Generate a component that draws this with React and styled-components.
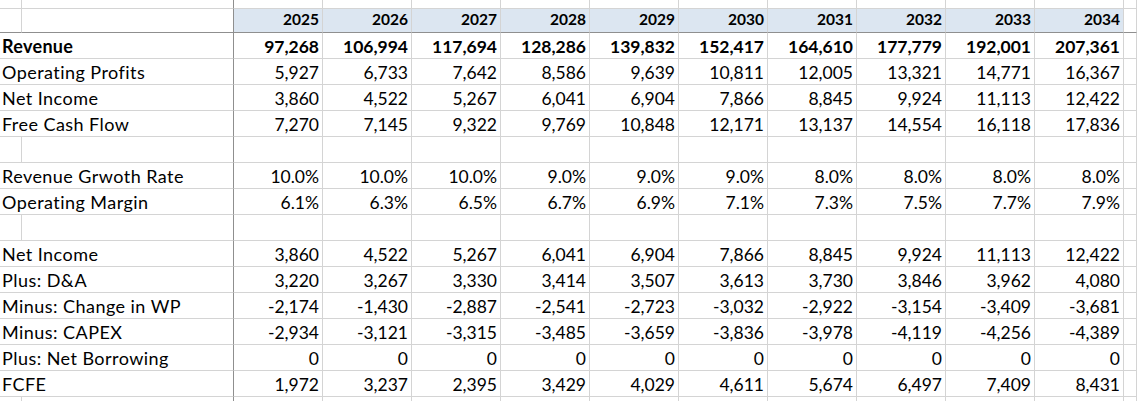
import React from 'react';
import styled, { createGlobalStyle } from 'styled-components';

const GlobalStyle = createGlobalStyle`
  body {
    margin: 0;
    background: #fff;
    color: #000;
    font-family: Lato, "Liberation Sans", sans-serif;
  }
`;

const years = [2025, 2026, 2027, 2028, 2029, 2030, 2031, 2032, 2033, 2034];

const rows = [
  { label: 'Revenue', bold: true, values: ['97,268', '106,994', '117,694', '128,286', '139,832', '152,417', '164,610', '177,779', '192,001', '207,361'] },
  { label: 'Operating Profits', values: ['5,927', '6,733', '7,642', '8,586', '9,639', '10,811', '12,005', '13,321', '14,771', '16,367'] },
  { label: 'Net Income', values: ['3,860', '4,522', '5,267', '6,041', '6,904', '7,866', '8,845', '9,924', '11,113', '12,422'] },
  { label: 'Free Cash Flow', values: ['7,270', '7,145', '9,322', '9,769', '10,848', '12,171', '13,137', '14,554', '16,118', '17,836'] },
  null,
  { label: 'Revenue Grwoth Rate', values: ['10.0%', '10.0%', '10.0%', '9.0%', '9.0%', '9.0%', '8.0%', '8.0%', '8.0%', '8.0%'] },
  { label: 'Operating Margin', values: ['6.1%', '6.3%', '6.5%', '6.7%', '6.9%', '7.1%', '7.3%', '7.5%', '7.7%', '7.9%'] },
  null,
  { label: 'Net Income', values: ['3,860', '4,522', '5,267', '6,041', '6,904', '7,866', '8,845', '9,924', '11,113', '12,422'] },
  { label: 'Plus: D&A', values: ['3,220', '3,267', '3,330', '3,414', '3,507', '3,613', '3,730', '3,846', '3,962', '4,080'] },
  { label: 'Minus: Change in WP', values: ['-2,174', '-1,430', '-2,887', '-2,541', '-2,723', '-3,032', '-2,922', '-3,154', '-3,409', '-3,681'] },
  { label: 'Minus: CAPEX', values: ['-2,934', '-3,121', '-3,315', '-3,485', '-3,659', '-3,836', '-3,978', '-4,119', '-4,256', '-4,389'] },
  { label: 'Plus: Net Borrowing', values: ['0', '0', '0', '0', '0', '0', '0', '0', '0', '0'] },
  { label: 'FCFE', values: ['1,972', '3,237', '2,395', '3,429', '4,029', '4,611', '5,674', '6,497', '7,409', '8,431'] },
  null,
];

const GRID = '#d4d4d4';
const FREEZE = '#8f8f8f';

const Sheet = styled.div`
  width: 1137px;
  height: 401px;
  overflow: hidden;
  background: #fff;
`;

const Row = styled.div`
  display: grid;
  grid-template-columns: 22px 212px repeat(10, 89px) 1fr;
  height: ${p => p.$h || 26}px;
`;

const Cell = styled.div`
  box-sizing: border-box;
  min-width: 0;
  display: flex;
  align-items: flex-end;
  justify-content: flex-end;
  padding: 0 3px 1px 2px;
  border-right: 1px solid ${p => (p.$freezeCol ? FREEZE : GRID)};
  border-bottom: 1px solid ${p => (p.$freezeRow ? FREEZE : GRID)};
  background: ${p => (p.$fill ? '#dce6f1' : 'transparent')};
  font-size: 17.5px;
  line-height: 1.2;
  font-weight: ${p => (p.$bold ? 700 : 400)};
  white-space: nowrap;
`;

const LabelCell = styled(Cell)`
  grid-column: span 2;
  justify-content: flex-start;
  padding-bottom: 0;
  border-right-color: ${FREEZE};
  font-size: 18px;
  letter-spacing: ${p => (p.$bold ? 0.3 : 0.45)}px;
`;

const YearCell = styled(Cell)`
  font-size: 15.5px;
  font-weight: 700;
  padding-bottom: 3px;
`;

const EmptyLabel = ({ freezeRow }) => (
  <>
    <Cell $freezeRow={freezeRow} />
    <Cell $freezeRow={freezeRow} $freezeCol />
  </>
);

const App = () => (
  <Sheet>
    <GlobalStyle />
    <Row $h={9}>
      <EmptyLabel />
      {years.map(y => <Cell key={y} />)}
      <Cell />
    </Row>
    <Row $h={24}>
      <EmptyLabel freezeRow />
      {years.map(y => (
        <YearCell key={y} $fill $freezeRow>{y}</YearCell>
      ))}
      <Cell $freezeRow />
    </Row>
    {rows.map((row, i) =>
      row ? (
        <Row key={i}>
          <LabelCell $bold={row.bold}>{row.label}</LabelCell>
          {row.values.map((v, j) => (
            <Cell key={j} $bold={row.bold}>{v}</Cell>
          ))}
          <Cell />
        </Row>
      ) : (
        <Row key={i}>
          <EmptyLabel />
          {years.map(y => <Cell key={y} />)}
          <Cell />
        </Row>
      )
    )}
  </Sheet>
);

export default App;
